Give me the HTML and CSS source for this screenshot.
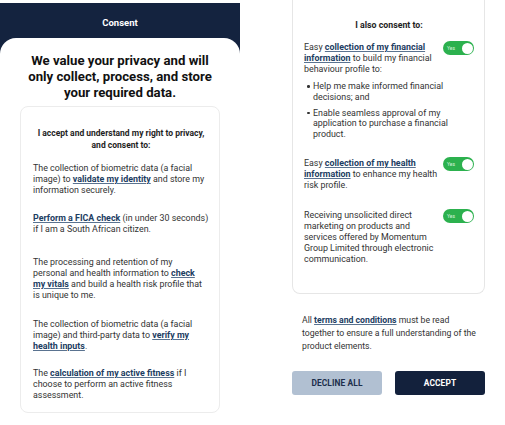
FILE: index.html
```html
<!DOCTYPE html>
<html>
<head>
<meta charset="utf-8">
<link rel="stylesheet" href="styles.css">
</head>
<body>
<div class="page">
  <section class="phone left">
    <header class="topbar">Consent</header>
    <div class="sheet">
      <h1 class="headline">We value your privacy and will only collect, process, and store your required data.</h1>
      <div class="box">
        <h2 class="boxhead">I accept and understand my right to privacy, and consent to:</h2>
        <p class="item gap17">The collection of biometric data (a facial image) to <a class="lnk">validate my identity</a> and store my information securely.</p>
        <p class="item gap22"><a class="lnk">Perform a FICA check</a> (in under 30 seconds) if I am a South African citizen.</p>
        <p class="item gap18">The processing and retention of my<br>personal and health information to <a class="lnk">check<br>my vitals</a> and build a health risk profile that is unique to me.</p>
        <p class="item gap16">The collection of biometric data (a facial image) and third-party data to <a class="lnk">verify my health inputs</a>.</p>
        <p class="item last">The <a class="lnk">calculation of my active fitness</a> if I choose to perform an active fitness assessment.</p>
      </div>
    </div>
  </section>
  <section class="phone right">
    <div class="card">
      <h2 class="cardhead">I also consent to:</h2>
      <div class="row">
        <div class="rowtext">
          <p>Easy <a class="lnk">collection of my financial information</a> to build my financial behaviour profile to:</p>
          <ul class="bullets">
            <li>Help me make informed financial decisions; and</li>
            <li>Enable seamless approval of my application to purchase a financial product.</li>
          </ul>
        </div>
        <span class="toggle"><span class="yes">Yes</span><span class="knob"></span></span>
      </div>
      <div class="row">
        <div class="rowtext">
          <p>Easy <a class="lnk">collection of my health information</a> to enhance my health risk profile.</p>
        </div>
        <span class="toggle"><span class="yes">Yes</span><span class="knob"></span></span>
      </div>
      <div class="row">
        <div class="rowtext">
          <p>Receiving unsolicited direct marketing on products and<br>services offered by Momentum Group Limited through electronic communication.</p>
        </div>
        <span class="toggle"><span class="yes">Yes</span><span class="knob"></span></span>
      </div>
    </div>
    <p class="terms">All <a class="lnk">terms and conditions</a> must be read together to ensure a full understanding of the product elements.</p>
    <div class="actions">
      <button class="btn decline">DECLINE ALL</button>
      <button class="btn accept">ACCEPT</button>
    </div>
  </section>
</div>
</body>
</html>
```
FILE: styles.css
```css
* { box-sizing: border-box; }
html, body { margin: 0; padding: 0; background: #fff; }
body {
  font-family: Roboto, "Liberation Sans", Arial, sans-serif;
  color: #2b2b2b;
  width: 505px;
  height: 425px;
  overflow: hidden;
}
.page {
  display: flex;
  align-items: flex-start;
}
.phone.left {
  width: 240px;
  margin-top: 3px;
  background: linear-gradient(#14233f 0, #14233f 52px, #fff 52px);
}
.topbar {
  height: 35px;
  display: flex;
  align-items: center;
  justify-content: center;
  color: #fff;
  font-weight: 700;
  font-size: 9.5px;
  padding-top: 3px;
}
.sheet {
  background: #fff;
  border-radius: 16px 16px 0 0;
  padding: 15px 20px 0;
  height: 400px;
}
.headline {
  margin: 0 0 5px;
  font-size: 13.2px;
  line-height: 16px;
  font-weight: 700;
  text-align: center;
  color: #111;
}
.box {
  border: 1px solid #ececec;
  border-radius: 8px;
  padding: 20px 10px 12px 12px;
  height: 307px;
}
.boxhead {
  margin: 0 0 12px;
  font-size: 8.5px;
  line-height: 12px;
  font-weight: 700;
  text-align: center;
  color: #1e1e1e;
}
.item {
  margin: 0;
  font-size: 8.9px;
  line-height: 11px;
  color: #333;
}
.gap17 { margin-bottom: 17px; }
.gap22 { margin-bottom: 22px; }
.gap18 { margin-bottom: 18px; }
.gap16 { margin-bottom: 16px; }
.lnk {
  color: #1c3d62;
  font-weight: 700;
  text-decoration: underline;
  text-decoration-color: #5a7390;
}
.phone.right {
  width: 193px;
  margin-left: 52px;
}
.card {
  border: 1px solid #e6e6e6;
  border-top: none;
  border-radius: 0 0 8px 8px;
  padding: 19px 10px 28px 11px;
}
.cardhead {
  margin: 0 0 11px;
  font-size: 8.8px;
  line-height: 12px;
  font-weight: 700;
  text-align: center;
  color: #1e1e1e;
}
.row {
  display: flex;
  justify-content: space-between;
  align-items: flex-start;
  margin-bottom: 19px;
}
.row:last-child { margin-bottom: 0; }
.row + .row { margin-top: 1px; }
.rowtext {
  width: 137px;
  font-size: 8.9px;
  line-height: 11px;
  color: #333;
}
.rowtext p { margin: 0; }
.bullets {
  margin: 6px 0 0;
  padding: 0 0 0 9px;
  width: 152px;
  line-height: 10.5px;
}
.bullets li {
  margin-bottom: 5.5px;
  list-style: none;
  position: relative;
}
.bullets li:last-child { margin-bottom: 0; }
.bullets li::before {
  content: "";
  position: absolute;
  left: -6px;
  top: 4px;
  width: 2.5px;
  height: 2.5px;
  border-radius: 50%;
  background: #333;
}
.toggle {
  flex: none;
  width: 31px;
  height: 14px;
  margin-top: -1px;
  border-radius: 7px;
  background: #2cb14e;
  display: flex;
  align-items: center;
  justify-content: space-between;
  padding: 0 1.5px 0 4px;
}
.yes {
  color: #d9f2df;
  font-size: 5px;
  line-height: 5px;
}
.knob {
  width: 11px;
  height: 11px;
  border-radius: 50%;
  background: #fff;
}
.terms {
  margin: 20px 5px 0 10px;
  font-size: 8.7px;
  line-height: 13px;
  color: #333;
}
.actions {
  display: flex;
  justify-content: space-between;
  margin-top: 18px;
}
.btn {
  width: 90px;
  height: 24px;
  border: none;
  border-radius: 3px;
  font-family: inherit;
  font-size: 8.4px;
  font-weight: 700;
  letter-spacing: 0.1px;
}
.decline {
  background: #b1c0d2;
  color: #1d2f4c;
}
.accept {
  background: #13213c;
  color: #fff;
}
```
